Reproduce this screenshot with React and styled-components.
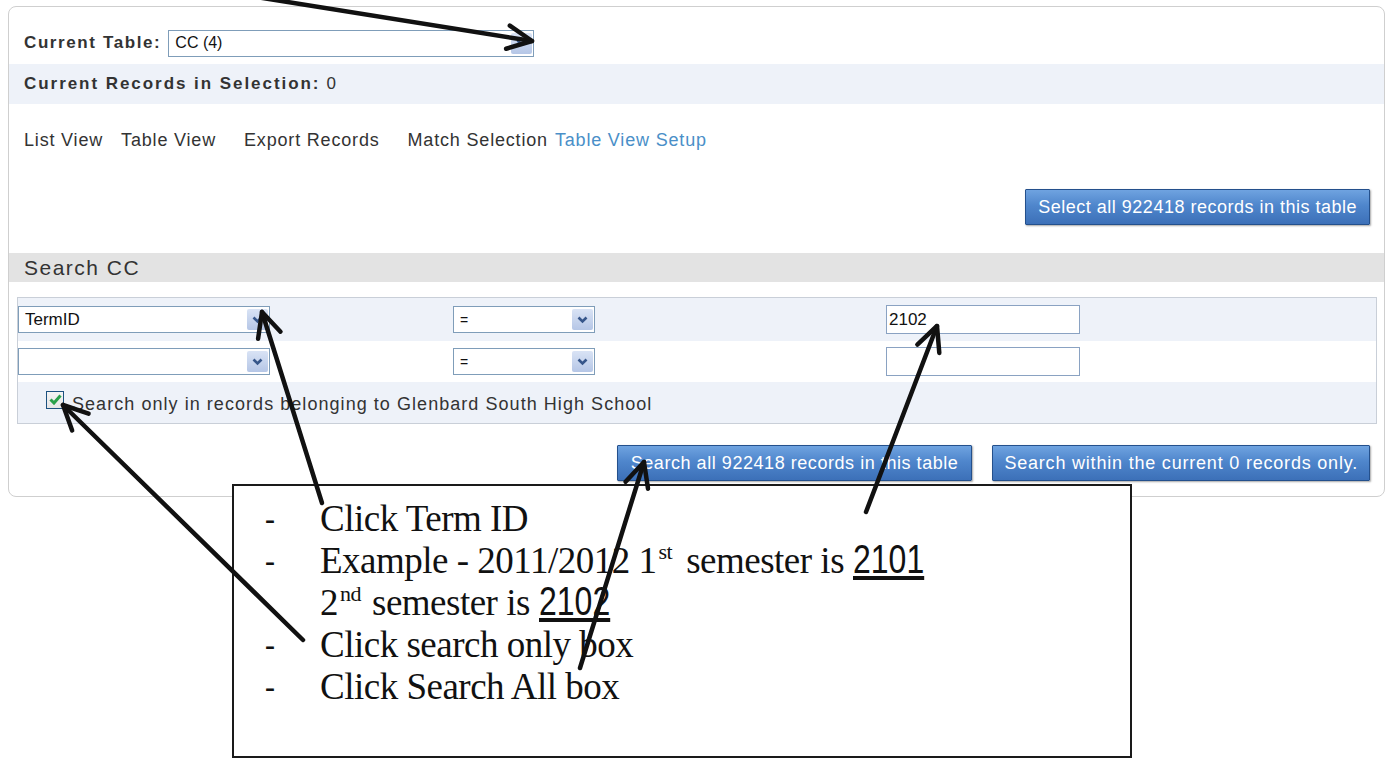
import styled, { createGlobalStyle } from 'styled-components';

const GlobalStyle = createGlobalStyle`
  * { box-sizing: border-box; }
  body {
    margin: 0;
    background: #fff;
    font-family: "Liberation Sans", Arial, sans-serif;
    color: #222;
  }
`;

const Page = styled.div`
  position: relative;
  width: 1393px;
  height: 763px;
  padding: 6px 8px 0 8px;
  overflow: hidden;
`;

const Panel = styled.div`
  border: 1px solid #cfcfcf;
  border-radius: 8px;
  height: 491px;
  display: flex;
  flex-direction: column;
`;

const TableRow = styled.div`
  display: flex;
  align-items: center;
  gap: 7px;
  height: 57px;
  padding: 15px 15px 0;
`;

const Label = styled.span`
  font-weight: bold;
  font-size: 17px;
  letter-spacing: 1.6px;
  color: #333;
`;

const SelectionRow = styled.div`
  background: #eef2f9;
  height: 40px;
  display: flex;
  align-items: center;
  padding: 0 15px;
  font-size: 17px;
  letter-spacing: 1.95px;
  color: #333;

  b { margin-right: 6px; }
`;

const LinkBar = styled.div`
  display: flex;
  align-items: center;
  height: 72px;
  padding: 0 15px;
  font-size: 18px;
  letter-spacing: 0.82px;
  color: #333;
`;

const NavLink = styled.span`
  margin-right: ${(p) => p.$gap || 18}px;
  color: ${(p) => (p.$active ? '#4a8fc8' : '#333')};
`;

const ActionRow = styled.div`
  display: flex;
  justify-content: flex-end;
  gap: 20px;
  padding: ${(p) => p.$pad || '11px 14px 0'};
`;

const BlueButton = styled.button`
  height: 36px;
  padding: 0 ${(p) => p.$px || 12}px;
  border: 1px solid #24508c;
  border-radius: 1px;
  background: linear-gradient(#6fa3e0 0%, #4f86cc 45%, #3c70b8 100%);
  box-shadow: 1px 1px 2px rgba(0, 0, 0, 0.35);
  color: #fff;
  font-family: "Liberation Sans", Arial, sans-serif;
  font-size: 18px;
  letter-spacing: ${(p) => p.$ls || 0.5}px;
  cursor: pointer;
`;

const SectionHeader = styled.div`
  margin-top: 28px;
  background: #e3e3e3;
  height: 29px;
  display: flex;
  align-items: center;
  padding: 0 15px;
  font-size: 21px;
  letter-spacing: 1.5px;
  color: #333;
`;

const SearchBox = styled.div`
  margin: 15px 7px 0 8px;
  border: 1px solid #c9cfd8;
  display: flex;
  flex-direction: column;
`;

const SearchRow = styled.div`
  display: grid;
  grid-template-columns: 435px 433px 1fr;
  align-items: center;
  height: ${(p) => p.$h}px;
  background: ${(p) => (p.$shade ? '#eef2f9' : '#fff')};
`;

const SelectBox = styled.div`
  width: ${(p) => p.$w}px;
  height: ${(p) => p.$h || 27}px;
  border: 1px solid #7f9db9;
  background: #fff;
  display: flex;
  align-items: center;
  justify-content: space-between;
  padding: 0 1px 0 6px;
  font-size: ${(p) => p.$fs || 17}px;
  color: #111;
`;

const DropButton = styled.span`
  width: 21px;
  height: calc(100% - 4px);
  border-radius: 2px;
  background: linear-gradient(#d9e3f5, #b5c6e6);
  display: flex;
  align-items: center;
  justify-content: center;
`;

const TextInput = styled.div`
  width: 194px;
  height: 29px;
  border: 1px solid #8aa2c2;
  background: #fff;
  padding: 2px 2px;
  font-size: 17px;
  color: #111;
  display: flex;
  align-items: center;
`;

const CheckRow = styled.label`
  display: flex;
  align-items: center;
  gap: 8px;
  height: 41px;
  padding: 3px 0 0 28px;
  background: #eef2f9;
  font-size: 18px;
  letter-spacing: 1.05px;
  color: #333;
`;

const CheckBox = styled.span`
  width: 18px;
  height: 18px;
  border: 1px solid #1c5180;
  background: linear-gradient(#f4f4f4, #e6e6e6);
  display: flex;
  align-items: center;
  justify-content: center;
  margin-top: -9px;
`;

const Note = styled.div`
  position: absolute;
  left: 232px;
  top: 484px;
  width: 900px;
  height: 274px;
  border: 2px solid #1a1a1a;
  background: #fff;
  padding: 12px 0 0 31px;
  font-family: "Liberation Serif", "Times New Roman", serif;
  font-size: 37px;
  letter-spacing: -0.5px;
  color: #111;
`;

const NoteList = styled.ul`
  list-style: none;
  margin: 0;
  padding: 0;
`;

const NoteItem = styled.li`
  display: grid;
  grid-template-columns: 55px 1fr;
  line-height: 42px;
  height: 42px;
  white-space: nowrap;
`;

const Dash = styled.span`
  font-size: 30px;
  font-weight: bold;
`;

const Code = styled.span`
  display: inline-block;
  font-family: "Liberation Sans", Arial, sans-serif;
  font-size: 40px;
  letter-spacing: 0;
  border-bottom: 4px solid #111;
  line-height: 34px;
  transform: scaleX(0.8);
  transform-origin: left center;
`;

const Sup = styled.sup`
  font-size: 22px;
  line-height: 0;
  vertical-align: 14px;
  margin: 0 ${(p) => p.$after || 14}px 0 2px;
`;

const Overlay = styled.svg`
  position: absolute;
  left: 0;
  top: 0;
  pointer-events: none;
`;

function Chevron() {
  return (
    <svg width="11" height="8" viewBox="0 0 11 8">
      <path d="M1.5 1.5 L5.5 5.5 L9.5 1.5" fill="none" stroke="#36568a" strokeWidth="2.6" />
    </svg>
  );
}

function Select({ value, w, h, fs }) {
  return (
    <SelectBox $w={w} $h={h} $fs={fs}>
      <span>{value}</span>
      <DropButton>
        <Chevron />
      </DropButton>
    </SelectBox>
  );
}

function Arrow({ from, to }) {
  const [x1, y1] = from;
  const [x2, y2] = to;
  const a = Math.atan2(y2 - y1, x2 - x1);
  const len = 27;
  const spread = 0.45;
  const w1 = [x2 - len * Math.cos(a - spread), y2 - len * Math.sin(a - spread)];
  const w2 = [x2 - len * Math.cos(a + spread), y2 - len * Math.sin(a + spread)];
  return (
    <g>
      <line x1={x1} y1={y1} x2={x2} y2={y2} />
      <path d={`M${w1[0]} ${w1[1]} L${x2} ${y2} L${w2[0]} ${w2[1]}`} />
    </g>
  );
}

const arrows = [
  { from: [250, -4], to: [532, 41] },
  { from: [322, 503], to: [262, 312] },
  { from: [303, 640], to: [63, 405] },
  { from: [580, 668], to: [644, 462] },
  { from: [866, 512], to: [937, 326] },
];

export default function App() {
  return (
    <Page>
      <GlobalStyle />
      <Panel>
        <TableRow>
          <Label>Current Table:</Label>
          <Select value="CC (4)" w={366} h={27} fs={16} />
        </TableRow>
        <SelectionRow>
          <b>Current Records in Selection:</b> 0
        </SelectionRow>
        <LinkBar>
          <NavLink>List View</NavLink>
          <NavLink $gap={28}>Table View</NavLink>
          <NavLink $gap={28}>Export Records</NavLink>
          <NavLink $gap={7}>Match Selection</NavLink>
          <NavLink $active>Table View Setup</NavLink>
        </LinkBar>
        <ActionRow $pad="13px 14px 0">
          <BlueButton>Select all 922418 records in this table</BlueButton>
        </ActionRow>
        <SectionHeader>Search CC</SectionHeader>
        <SearchBox>
          <SearchRow $h={43} $shade>
            <Select value="TermID" w={252} />
            <Select value="=" w={142} fs={14} />
            <TextInput>2102</TextInput>
          </SearchRow>
          <SearchRow $h={41}>
            <Select value="" w={252} />
            <Select value="=" w={142} fs={14} />
            <TextInput />
          </SearchRow>
          <CheckRow>
            <CheckBox>
              <svg width="13" height="11" viewBox="0 0 13 11">
                <path d="M1.5 5.5 L5 9 L11.5 1.5" fill="none" stroke="#2aa14a" strokeWidth="3" />
              </svg>
            </CheckBox>
            Search only in records belonging to Glenbard South High School
          </CheckRow>
        </SearchBox>
        <ActionRow $pad="21px 14px 0">
          <BlueButton $px={13} $ls={0.55}>Search all 922418 records in this table</BlueButton>
          <BlueButton $px={11} $ls={0.8}>Search within the current 0 records only.</BlueButton>
        </ActionRow>
      </Panel>

      <Note>
        <NoteList>
          <NoteItem>
            <Dash>-</Dash>
            <span>Click Term ID</span>
          </NoteItem>
          <NoteItem>
            <Dash>-</Dash>
            <span>
              Example - 2011/2012 1<Sup>st</Sup>semester is <Code>2101</Code>
            </span>
          </NoteItem>
          <NoteItem>
            <span />
            <span>
              2<Sup $after={11}>nd</Sup>semester is <Code>2102</Code>
            </span>
          </NoteItem>
          <NoteItem>
            <Dash>-</Dash>
            <span>Click search only box</span>
          </NoteItem>
          <NoteItem>
            <Dash>-</Dash>
            <span>Click Search All box</span>
          </NoteItem>
        </NoteList>
      </Note>

      <Overlay width="1393" height="763" viewBox="0 0 1393 763">
        <g stroke="#111" strokeWidth="4.5" fill="none" strokeLinecap="round" strokeLinejoin="round">
          {arrows.map((a, i) => (
            <Arrow key={i} from={a.from} to={a.to} />
          ))}
        </g>
      </Overlay>
    </Page>
  );
}
